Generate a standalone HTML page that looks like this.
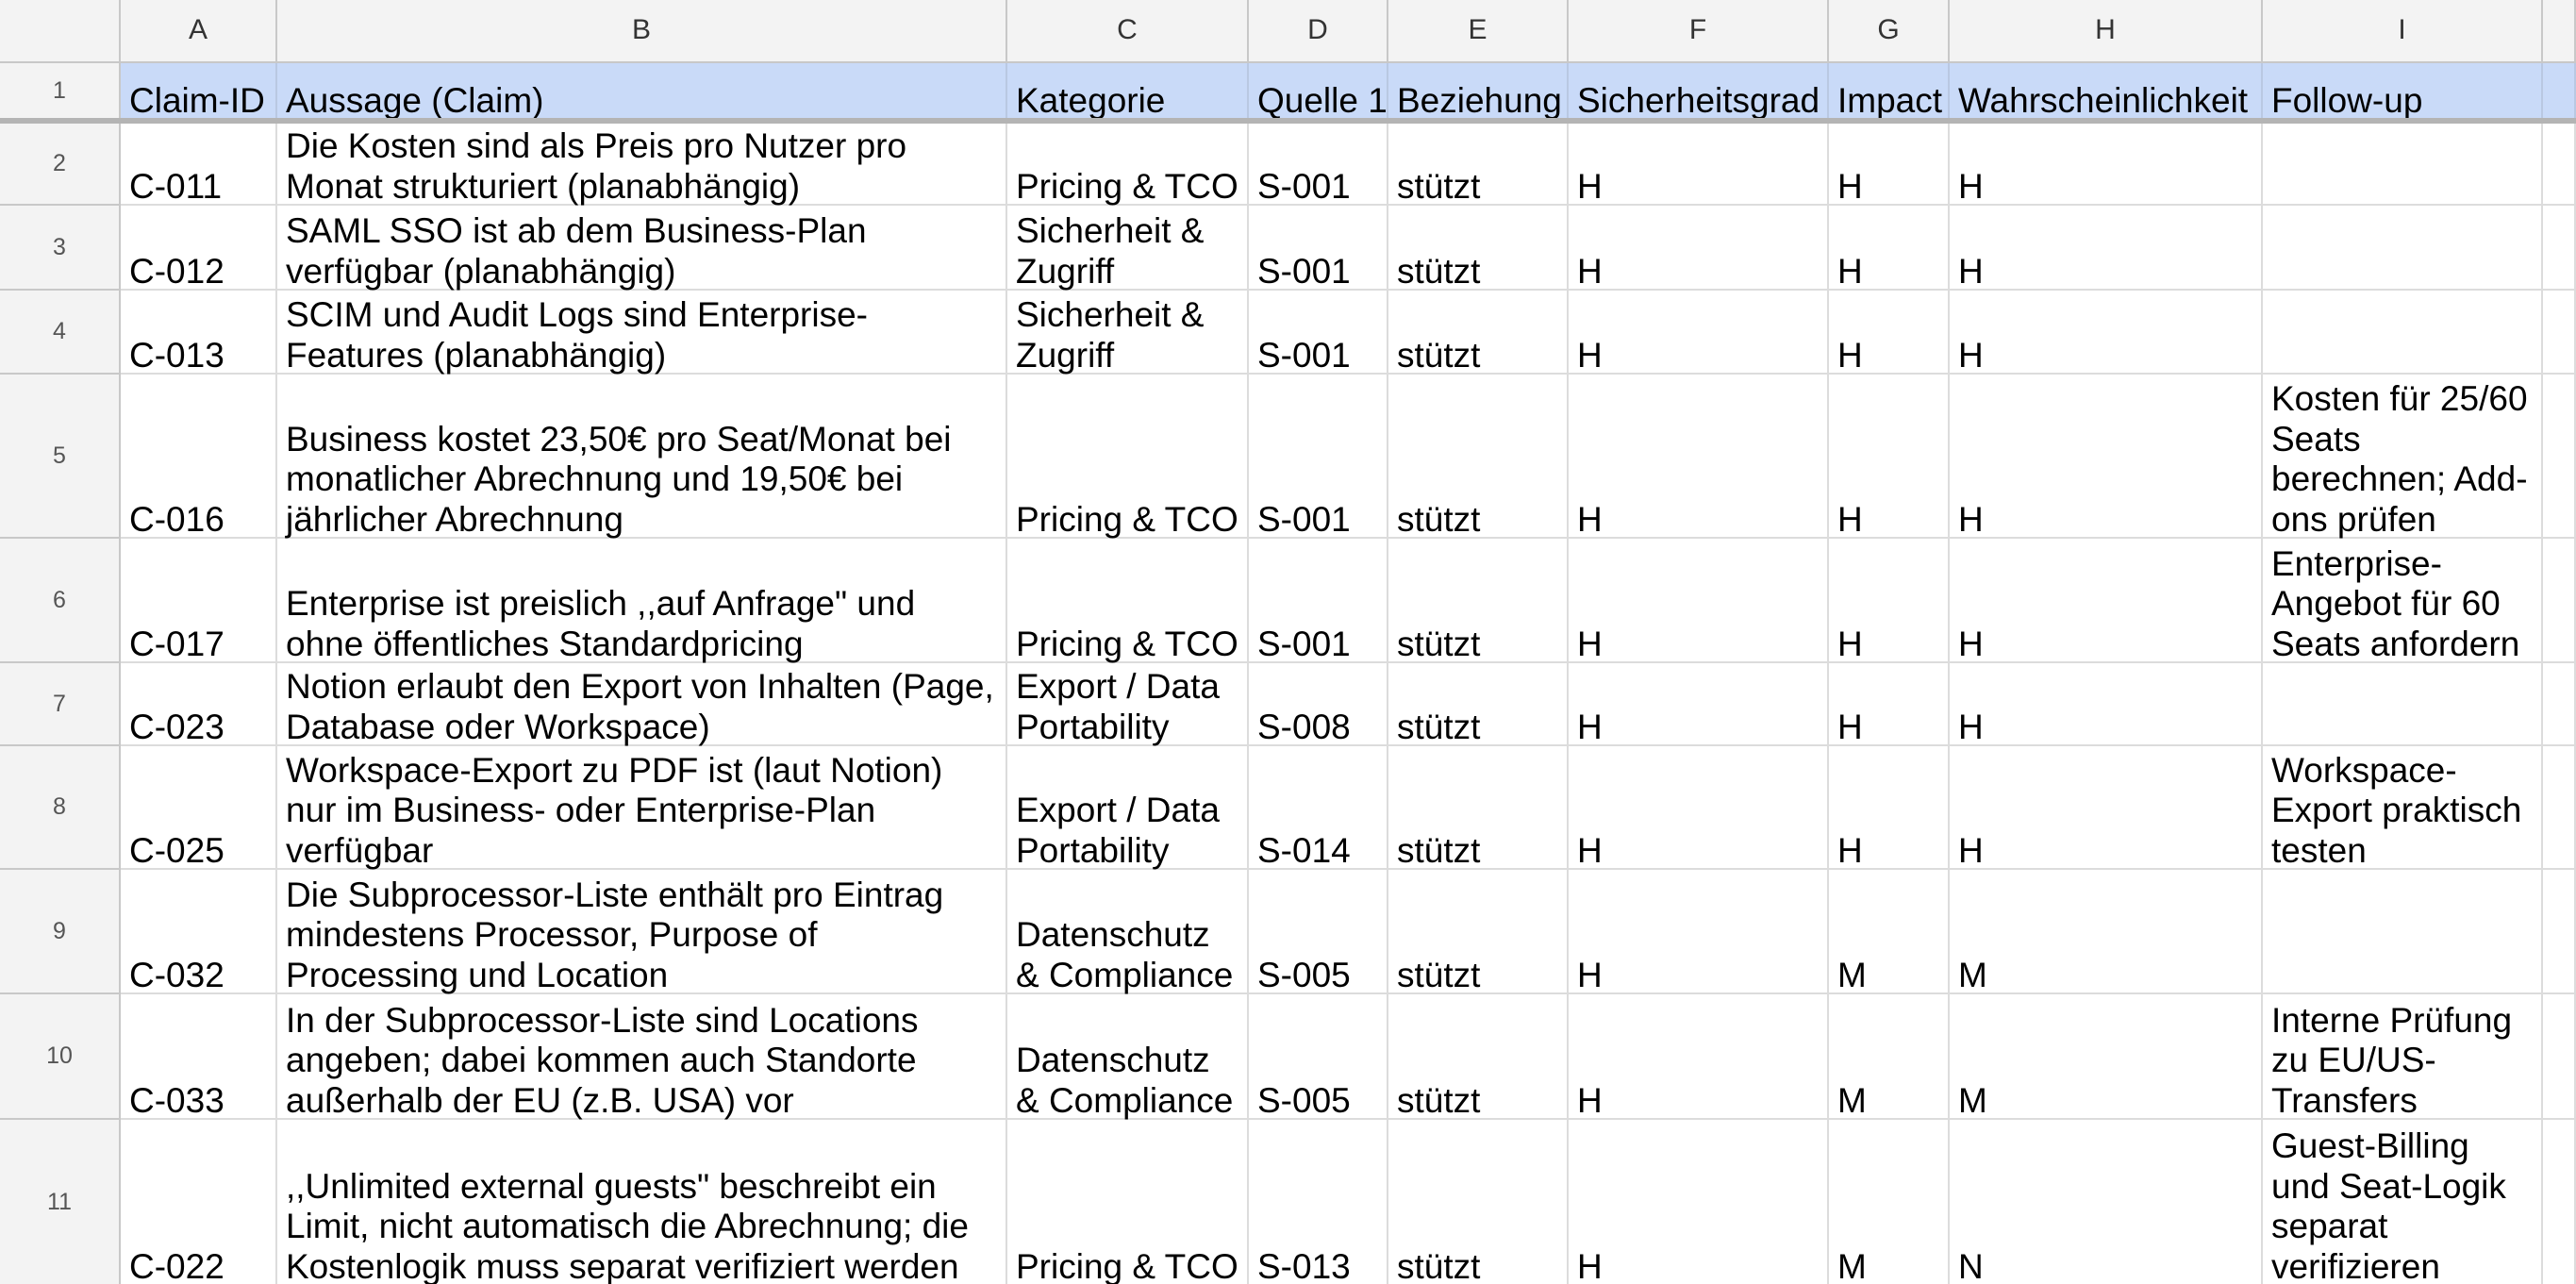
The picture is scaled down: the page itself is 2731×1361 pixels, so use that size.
<!DOCTYPE html>
<html><head><meta charset="utf-8"><style>
html,body{margin:0;padding:0;background:#fff;width:2731px;height:1361px;overflow:hidden}
body{position:relative;font-family:"Liberation Sans",Arial,sans-serif;font-size:37px;color:#000}
.r{position:absolute;left:0;width:2731px;display:flex}
.r>div{box-sizing:border-box;height:100%;border-right:2px solid #dcdcdc;border-bottom:2px solid #dcdcdc;padding:0 0 0 9px;display:flex;flex-direction:column;justify-content:flex-end;line-height:42.5px;white-space:nowrap;flex:none}
.r>div>i{font-style:normal;position:relative;top:3px}
.r>div:nth-child(1){width:128px;background:#f3f3f3;color:#555;font-size:25px;align-items:center;justify-content:center;padding:0;border-color:#c8c8c8}
.r>div:nth-child(2){width:166px}
.r>div:nth-child(3){width:774px}
.r>div:nth-child(4){width:256px}
.r>div:nth-child(5){width:148px}
.r>div:nth-child(6){width:191px}
.r>div:nth-child(7){width:276px}
.r>div:nth-child(8){width:128px}
.r>div:nth-child(9){width:332px}
.r>div:nth-child(10){width:297px}
.r>div:nth-child(11){width:35px}
.ch>div{background:#f3f3f3;color:#333;font-size:30px;align-items:center;justify-content:center;padding:0;border-color:#c8c8c8}
.h1>div{background:#c9daf8;border-bottom:none;border-right-color:#b9c8e2}
.bar{position:absolute;left:0;top:125px;width:2731px;height:6px;background:#b4b4b4}
</style></head><body>
<div class="r ch" style="top:0;height:67px"><div></div><div>A</div><div>B</div><div>C</div><div>D</div><div>E</div><div>F</div><div>G</div><div>H</div><div>I</div><div></div></div>
<div class="r h1" style="top:67px;height:58px"><div style="background:#f3f3f3;border-right-color:#c8c8c8">1</div><div><i>Claim-ID</i></div><div><i>Aussage (Claim)</i></div><div><i>Kategorie</i></div><div><i>Quelle 1</i></div><div><i>Beziehung</i></div><div><i>Sicherheitsgrad</i></div><div><i>Impact</i></div><div><i>Wahrscheinlichkeit</i></div><div><i>Follow-up</i></div><div></div></div>
<div class="bar"></div>
<div class="r" style="top:131px;height:87px"><div>2</div><div><i>C-011</i></div><div><i>Die Kosten sind als Preis pro Nutzer pro<br>Monat strukturiert (planabhängig)</i></div><div><i>Pricing &amp; TCO</i></div><div><i>S-001</i></div><div><i>stützt</i></div><div><i>H</i></div><div><i>H</i></div><div><i>H</i></div><div></div><div></div></div>
<div class="r" style="top:218px;height:90px"><div>3</div><div><i>C-012</i></div><div><i>SAML SSO ist ab dem Business-Plan<br>verfügbar (planabhängig)</i></div><div><i>Sicherheit &amp;<br>Zugriff</i></div><div><i>S-001</i></div><div><i>stützt</i></div><div><i>H</i></div><div><i>H</i></div><div><i>H</i></div><div></div><div></div></div>
<div class="r" style="top:308px;height:89px"><div>4</div><div><i>C-013</i></div><div><i>SCIM und Audit Logs sind Enterprise-<br>Features (planabhängig)</i></div><div><i>Sicherheit &amp;<br>Zugriff</i></div><div><i>S-001</i></div><div><i>stützt</i></div><div><i>H</i></div><div><i>H</i></div><div><i>H</i></div><div></div><div></div></div>
<div class="r" style="top:397px;height:174px"><div>5</div><div><i>C-016</i></div><div><i>Business kostet 23,50€ pro Seat/Monat bei<br>monatlicher Abrechnung und 19,50€ bei<br>jährlicher Abrechnung</i></div><div><i>Pricing &amp; TCO</i></div><div><i>S-001</i></div><div><i>stützt</i></div><div><i>H</i></div><div><i>H</i></div><div><i>H</i></div><div><i>Kosten für 25/60<br>Seats<br>berechnen; Add-<br>ons prüfen</i></div><div></div></div>
<div class="r" style="top:571px;height:132px"><div>6</div><div><i>C-017</i></div><div><i>Enterprise ist preislich ,,auf Anfrage" und<br>ohne öffentliches Standardpricing</i></div><div><i>Pricing &amp; TCO</i></div><div><i>S-001</i></div><div><i>stützt</i></div><div><i>H</i></div><div><i>H</i></div><div><i>H</i></div><div><i>Enterprise-<br>Angebot für 60<br>Seats anfordern</i></div><div></div></div>
<div class="r" style="top:703px;height:88px"><div>7</div><div><i>C-023</i></div><div><i>Notion erlaubt den Export von Inhalten (Page,<br>Database oder Workspace)</i></div><div><i>Export / Data<br>Portability</i></div><div><i>S-008</i></div><div><i>stützt</i></div><div><i>H</i></div><div><i>H</i></div><div><i>H</i></div><div></div><div></div></div>
<div class="r" style="top:791px;height:131px"><div>8</div><div><i>C-025</i></div><div><i>Workspace-Export zu PDF ist (laut Notion)<br>nur im Business- oder Enterprise-Plan<br>verfügbar</i></div><div><i>Export / Data<br>Portability</i></div><div><i>S-014</i></div><div><i>stützt</i></div><div><i>H</i></div><div><i>H</i></div><div><i>H</i></div><div><i>Workspace-<br>Export praktisch<br>testen</i></div><div></div></div>
<div class="r" style="top:922px;height:132px"><div>9</div><div><i>C-032</i></div><div><i>Die Subprocessor-Liste enthält pro Eintrag<br>mindestens Processor, Purpose of<br>Processing und Location</i></div><div><i>Datenschutz<br>&amp; Compliance</i></div><div><i>S-005</i></div><div><i>stützt</i></div><div><i>H</i></div><div><i>M</i></div><div><i>M</i></div><div></div><div></div></div>
<div class="r" style="top:1054px;height:133px"><div>10</div><div><i>C-033</i></div><div><i>In der Subprocessor-Liste sind Locations<br>angeben; dabei kommen auch Standorte<br>außerhalb der EU (z.B. USA) vor</i></div><div><i>Datenschutz<br>&amp; Compliance</i></div><div><i>S-005</i></div><div><i>stützt</i></div><div><i>H</i></div><div><i>M</i></div><div><i>M</i></div><div><i>Interne Prüfung<br>zu EU/US-<br>Transfers</i></div><div></div></div>
<div class="r" style="top:1187px;height:176px"><div>11</div><div><i>C-022</i></div><div><i>,,Unlimited external guests" beschreibt ein<br>Limit, nicht automatisch die Abrechnung; die<br>Kostenlogik muss separat verifiziert werden</i></div><div><i>Pricing &amp; TCO</i></div><div><i>S-013</i></div><div><i>stützt</i></div><div><i>H</i></div><div><i>M</i></div><div><i>N</i></div><div><i>Guest-Billing<br>und Seat-Logik<br>separat<br>verifizieren</i></div><div></div></div>
</body></html>
